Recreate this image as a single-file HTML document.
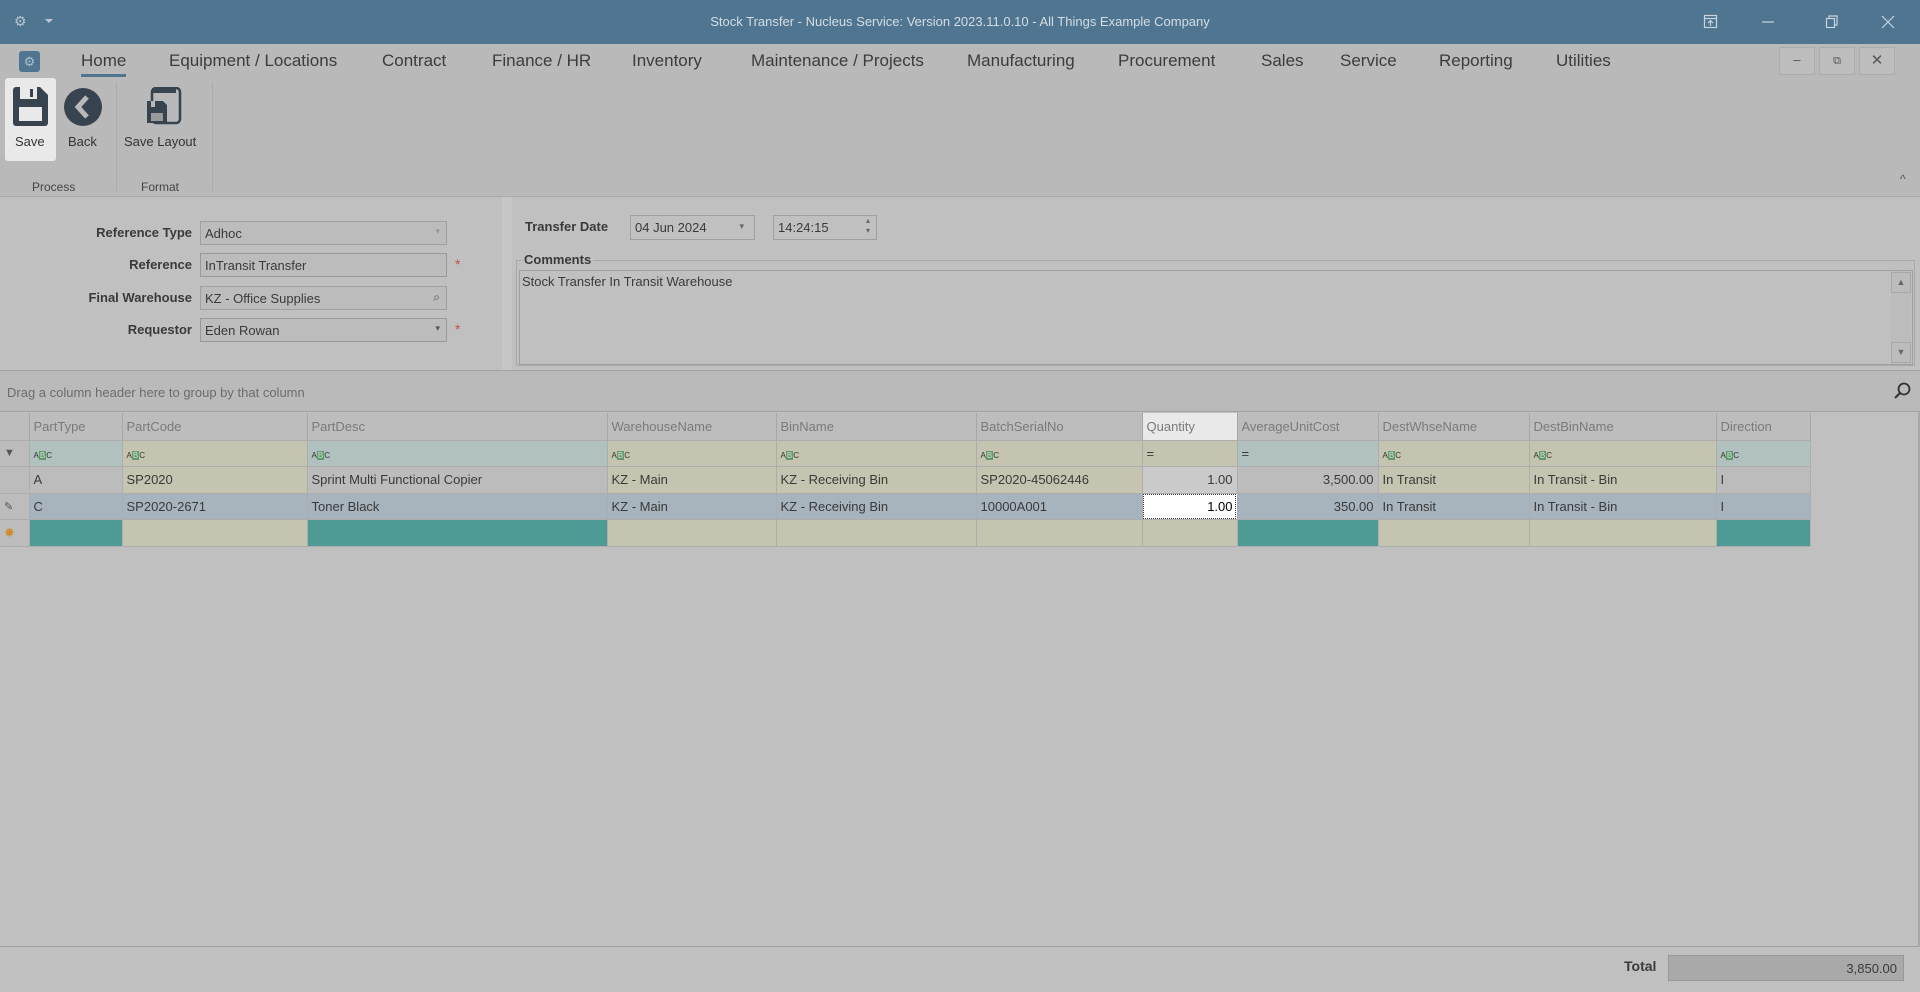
<!DOCTYPE html>
<html><head><meta charset="utf-8"><style>
*{box-sizing:border-box;margin:0;padding:0}
body{width:1920px;height:992px;overflow:hidden;background:#c0c0c0;font-family:"Liberation Sans",sans-serif;font-size:13px;color:#3a3a3a;position:relative}
.a{position:absolute}
.tab{position:absolute;top:51px;font-size:17px;color:#3c3c3c}
.lbl{position:absolute;right:1728px;font-weight:bold;font-size:13px;color:#3a3a3a;white-space:nowrap}
.inp{position:absolute;left:200px;width:247px;height:24px;border:1px solid #a0a0a0;background:#bcbcbc;padding:4px 4px;font-size:13px}
.star{position:absolute;left:455px;color:#c0504d;font-size:14px}
table{border-collapse:collapse;position:absolute;left:0;top:413px;table-layout:fixed}
td{border-right:1px solid #adadad;border-bottom:1px solid #adadad;height:26.5px;padding:0 4px;white-space:nowrap;overflow:hidden;font-size:13px}
tr.h td{color:#7a7a7a;background:#bdbdbd;height:27px;border-right:1px solid #a8a8a8}
.b{background:#c4c4b0}.g{background:#bcbcbc}.t{background:#b1c1c0}.s{background:#a7b3bd}.tl{background:#4e9a94}
.r{text-align:right}
.abc{display:inline-block;font-size:8px;color:#333;letter-spacing:0}
.abc b{display:inline-block;background:#5e9a6a;color:#ddd;padding:0 1px;font-weight:normal}
</style></head><body>
<div class="a" style="left:0;top:0;width:1920px;height:44px;background:#4f7590"></div>
<div class="a" style="left:14px;top:13px;color:#b8c8d4;font-size:14px">⚙</div>
<div class="a" style="left:45px;top:15px;width:0;height:0;border-left:4px solid transparent;border-right:4px solid transparent;border-top:4px solid #b8c8d4;margin-top:4px"></div>
<div class="a" style="left:0;top:14px;width:1920px;text-align:center;color:#d4dde5;font-size:13px">Stock Transfer - Nucleus Service: Version 2023.11.0.10 - All Things Example Company</div>
<svg class="a" style="left:1700px;top:14px" width="120" height="16"><g stroke="#c8d4de" stroke-width="1.2" fill="none"><rect x="4.5" y="1.5" width="12" height="12"/><line x1="4" y1="4.5" x2="17" y2="4.5"/><path d="M10.5 12V7M8 9l2.5-2.5L13 9"/><line x1="62" y1="8" x2="74" y2="8"/></g></svg>
<svg class="a" style="left:1822px;top:13px" width="98" height="18"><g stroke="#c8d4de" stroke-width="1.2" fill="none"><rect x="4.5" y="5.5" width="8" height="9"/><path d="M7 5V3h8v9h-2"/><path d="M60 3l12 12M72 3L60 15"/></g></svg>
<div class="a" style="left:0;top:44px;width:1920px;height:153px;background:#b9b9b9"></div>
<div class="a" style="left:19px;top:51px;width:21px;height:21px;background:#4f7590;border-radius:3px;color:#aac0d0;font-size:13px;text-align:center;line-height:21px">⚙</div>
<div class="tab" style="left:81px">Home</div>
<div class="a" style="left:81px;top:74px;width:45px;height:3px;background:#4f7590"></div>
<div class="tab" style="left:169px">Equipment / Locations</div>
<div class="tab" style="left:382px">Contract</div>
<div class="tab" style="left:492px">Finance / HR</div>
<div class="tab" style="left:632px">Inventory</div>
<div class="tab" style="left:751px">Maintenance / Projects</div>
<div class="tab" style="left:967px">Manufacturing</div>
<div class="tab" style="left:1118px">Procurement</div>
<div class="tab" style="left:1261px">Sales</div>
<div class="tab" style="left:1340px">Service</div>
<div class="tab" style="left:1439px">Reporting</div>
<div class="tab" style="left:1556px">Utilities</div>
<div class="a" style="left:1779px;top:47px;width:36px;height:28px;background:#bdbdbd;border:1px solid #adadad;text-align:center;color:#555;line-height:24px">–</div>
<div class="a" style="left:1819px;top:47px;width:36px;height:28px;background:#bdbdbd;border:1px solid #adadad;text-align:center;color:#555;line-height:26px;font-size:11px">⧉</div>
<div class="a" style="left:1859px;top:47px;width:36px;height:28px;background:#bdbdbd;border:1px solid #adadad;text-align:center;color:#555;line-height:26px;font-size:15px">✕</div>
<div class="a" style="left:5px;top:78px;width:51px;height:83px;background:#e9e9e9;border-radius:3px"></div>
<svg class="a" style="left:13px;top:87px" width="36" height="40"><path d="M0 3a3 3 0 0 1 3-3h24l8 8v28a3 3 0 0 1-3 3H3a3 3 0 0 1-3-3z" fill="#37434e"/><rect x="7" y="0" width="17" height="12" fill="#e9e9e9"/><rect x="17" y="2" width="3" height="8" fill="#37434e"/><rect x="6" y="20" width="23" height="14" fill="#e9e9e9"/></svg>
<div class="a" style="left:15px;top:134px;font-size:13px;color:#333">Save</div>
<svg class="a" style="left:63px;top:87px" width="40" height="40"><circle cx="20" cy="20" r="19" fill="#37434e"/><path d="M24 10l-9 10 9 10" stroke="#b9b9b9" stroke-width="5" fill="none"/></svg>
<div class="a" style="left:68px;top:134px;font-size:13px;color:#333">Back</div>
<div class="a" style="left:116px;top:83px;width:1px;height:108px;background:#acacac"></div>
<svg class="a" style="left:146px;top:87px" width="36" height="40"><rect x="6" y="1" width="28" height="35" rx="4" fill="none" stroke="#37434e" stroke-width="2.5"/><rect x="6" y="1" width="24" height="5" fill="#37434e"/><path d="M1 14h16l4 4v18H1z" fill="#37434e"/><rect x="5" y="26" width="12" height="8" fill="#9a9a9a"/><rect x="5" y="14" width="4" height="6" fill="#b9b9b9"/></svg>
<div class="a" style="left:124px;top:134px;font-size:13px;color:#333">Save Layout</div>
<div class="a" style="left:32px;top:180px;font-size:12px;color:#444">Process</div>
<div class="a" style="left:141px;top:180px;font-size:12px;color:#444">Format</div>
<div class="a" style="left:212px;top:83px;width:1px;height:108px;background:#acacac"></div>
<div class="a" style="left:1900px;top:172px;font-size:12px;color:#555">^</div>
<div class="a" style="left:0;top:196px;width:1920px;height:1px;background:#a9a9a9"></div>
<div class="a" style="left:0;top:197px;width:502px;height:173px;background:#c0c0c0"></div>
<div class="a" style="left:502px;top:197px;width:10px;height:173px;background:#c6c6c6"></div>
<div class="lbl" style="top:225px">Reference Type</div>
<div class="inp" style="top:221px;color:#3a3a3a">Adhoc<span style="position:absolute;right:6px;top:4px;color:#999;font-size:9px">▾</span></div>
<div class="lbl" style="top:257px">Reference</div>
<div class="inp" style="top:253px;border-color:#999">InTransit Transfer</div><div class="star" style="top:256px">*</div>
<div class="lbl" style="top:290px">Final Warehouse</div>
<div class="inp" style="top:286px">KZ - Office Supplies<span style="position:absolute;right:6px;top:3px;color:#555;font-size:12px">⌕</span></div>
<div class="lbl" style="top:322px">Requestor</div>
<div class="inp" style="top:318px;border-color:#999">Eden Rowan<span style="position:absolute;right:6px;top:4px;color:#555;font-size:9px">▾</span></div><div class="star" style="top:321px">*</div>
<div class="a" style="left:525px;top:219px;font-weight:bold">Transfer Date</div>
<div class="a" style="left:630px;top:215px;width:125px;height:25px;border:1px solid #a0a0a0;padding:4px 4px">04 Jun 2024<span style="position:absolute;right:10px;top:5px;color:#666;font-size:9px">▾</span></div>
<div class="a" style="left:773px;top:215px;width:104px;height:25px;border:1px solid #a0a0a0;padding:4px 4px">14:24:15<span style="position:absolute;right:6px;top:0px;color:#666;font-size:8px;line-height:10px">▴<br>▾</span></div>
<div class="a" style="left:516px;top:260px;width:1399px;height:106px;border:1px solid #a8a8a8"></div>
<div class="a" style="left:522px;top:252px;font-weight:bold;background:#c0c0c0;padding:0 2px">Comments</div>
<div class="a" style="left:519px;top:270px;width:1394px;height:95px;border:1px solid #a0a0a0"></div>
<div class="a" style="left:522px;top:274px">Stock Transfer In Transit Warehouse</div>
<div class="a" style="left:1891px;top:271px;width:20px;height:93px;background:#bcbcbc"></div>
<div class="a" style="left:1891px;top:272px;width:20px;height:21px;border:1px solid #a8a8a8;text-align:center;color:#666;font-size:9px;line-height:19px">▲</div>
<div class="a" style="left:1891px;top:342px;width:20px;height:21px;border:1px solid #a8a8a8;text-align:center;color:#666;font-size:9px;line-height:19px">▼</div>
<div class="a" style="left:0;top:370px;width:1920px;height:42px;background:#bababa;border-top:1px solid #a3a3a3;border-bottom:1px solid #a3a3a3"></div>
<div class="a" style="left:7px;top:385px;color:#6c6c6c">Drag a column header here to group by that column</div>
<svg class="a" style="left:1894px;top:382px" width="18" height="18"><circle cx="10" cy="7" r="5.5" stroke="#333" stroke-width="1.8" fill="none"/><path d="M6 11l-5 5" stroke="#333" stroke-width="2"/></svg>
<div class="a" style="left:0;top:412px;width:1920px;height:535px;background:#c0c0c0"></div>
<table>
<colgroup><col style="width:29px"><col style="width:93px"><col style="width:185px"><col style="width:300px"><col style="width:169px"><col style="width:200px"><col style="width:166px"><col style="width:95px"><col style="width:141px"><col style="width:151px"><col style="width:187px"><col style="width:94px"></colgroup>
<tr class="h"><td></td><td>PartType</td><td>PartCode</td><td>PartDesc</td><td>WarehouseName</td><td>BinName</td><td>BatchSerialNo</td><td style="background:#e9e9e9">Quantity</td><td>AverageUnitCost</td><td>DestWhseName</td><td>DestBinName</td><td>Direction</td></tr>
<tr><td class="g" style="color:#555;font-size:11px">▼</td><td class="t"><span class="abc">A<b>B</b>C</span></td><td class="b"><span class="abc">A<b>B</b>C</span></td><td class="t"><span class="abc">A<b>B</b>C</span></td><td class="b"><span class="abc">A<b>B</b>C</span></td><td class="b"><span class="abc">A<b>B</b>C</span></td><td class="b"><span class="abc">A<b>B</b>C</span></td><td class="b">=</td><td class="t">=</td><td class="b"><span class="abc">A<b>B</b>C</span></td><td class="b"><span class="abc">A<b>B</b>C</span></td><td class="t"><span class="abc">A<b>B</b>C</span></td></tr>
<tr><td class="g"></td><td class="g">A</td><td class="b">SP2020</td><td class="g">Sprint Multi Functional Copier</td><td class="b">KZ - Main</td><td class="b">KZ - Receiving Bin</td><td class="b">SP2020-45062446</td><td class="r" style="background:#cacaca">1.00</td><td class="g r">3,500.00</td><td class="b">In Transit</td><td class="b">In Transit - Bin</td><td class="g">I</td></tr>
<tr><td class="g" style="color:#555;font-size:11px">✎</td><td class="s">C</td><td class="s">SP2020-2671</td><td class="s">Toner Black</td><td class="s">KZ - Main</td><td class="s">KZ - Receiving Bin</td><td class="s">10000A001</td><td class="r" style="background:#fff;outline:1px dotted #333;outline-offset:-2px;color:#000">1.00</td><td class="s r">350.00</td><td class="s">In Transit</td><td class="s">In Transit - Bin</td><td class="s">I</td></tr>
<tr><td class="g" style="color:#d08a30">✸</td><td class="tl"></td><td class="b"></td><td class="tl"></td><td class="b"></td><td class="b"></td><td class="b"></td><td class="b"></td><td class="tl"></td><td class="b"></td><td class="b"></td><td class="tl"></td></tr>
</table>
<div class="a" style="left:0;top:946px;width:1920px;height:1px;background:#a0a0a0"></div>
<div class="a" style="left:1918px;top:412px;width:2px;height:535px;background:#a8a8a8"></div>
<div class="a" style="left:1624px;top:958px;font-weight:bold;font-size:14px">Total</div>
<div class="a" style="left:1668px;top:955px;width:236px;height:26px;background:#a9a9a9;border:1px solid #999;text-align:right;padding:5px 6px;font-size:13px">3,850.00</div>
</body></html>
